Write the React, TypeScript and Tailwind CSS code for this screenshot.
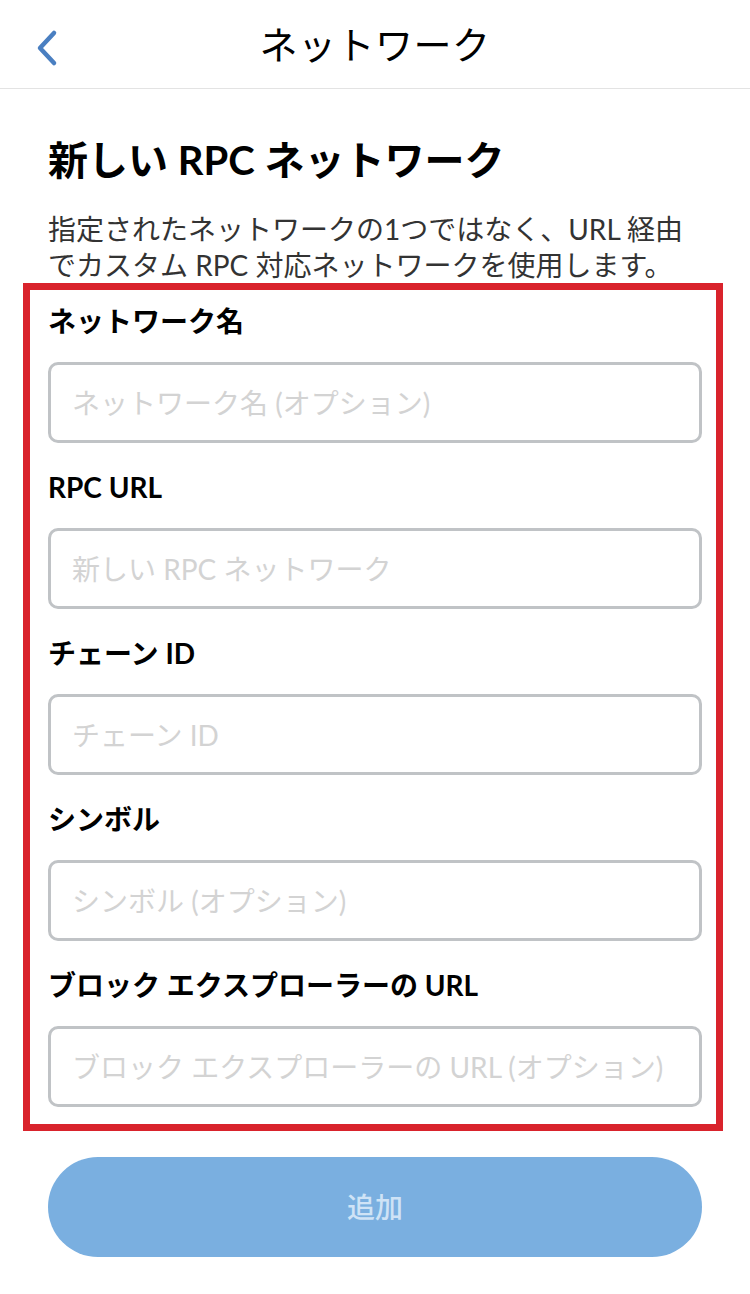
import React from 'react';

const fields = [
  { label: 'ネットワーク名', placeholder: 'ネットワーク名 (オプション)' },
  { label: 'RPC URL', placeholder: '新しい RPC ネットワーク' },
  { label: 'チェーン ID', placeholder: 'チェーン ID' },
  { label: 'シンボル', placeholder: 'シンボル (オプション)' },
  { label: 'ブロック エクスプローラーの URL', placeholder: 'ブロック エクスプローラーの URL (オプション)' },
];

export default function App() {
  return (
    <div className="min-h-screen bg-white font-['Lato','Noto_Sans_CJK_JP',sans-serif] text-black">
      {/* header */}
      <div className="relative h-[89px] border-b border-[#e3e3e3] flex items-center justify-center">
        <button className="absolute left-[30px] top-[24px] w-[36px] h-[48px] flex items-center justify-center">
          <svg width="26" height="40" viewBox="0 0 26 40" fill="none">
            <path d="M19 5 L5 20 L19 35" stroke="#4a7fc1" strokeWidth="4.5" strokeLinecap="round" strokeLinejoin="round" />
          </svg>
        </button>
        <h1 className="text-[38px] leading-[48px] font-normal tracking-[0.5px]">ネットワーク</h1>
      </div>

      <div className="px-[48px]">
        <h2 className="mt-[46px] text-[40px] leading-[50px] font-bold">新しい RPC ネットワーク</h2>
        <p className="mt-[26px] text-[28px] leading-[36px] text-[#333]">
          指定されたネットワークの1つではなく、URL 経由
          <br />
          でカスタム RPC 対応ネットワークを使用します。
        </p>

        <div className="ml-[-25px] mr-[-21px] border-[7px] border-[#d9232c] pl-[18px] pr-[14px] pt-[13px] pb-[17px] flex flex-col gap-[26px]">
          {fields.map((f) => (
            <div key={f.label} className="flex flex-col gap-[23px]">
              <label className="text-[28px] leading-[36px] font-bold">{f.label}</label>
              <input
                placeholder={f.placeholder}
                className="h-[81px] w-full rounded-[10px] border-[3px] border-[#c0c3c6] px-[21px] text-[28px] outline-none placeholder:text-[#d3d3d3]"
              />
            </div>
          ))}
        </div>

        <button className="mt-[26px] h-[100px] w-full rounded-full bg-[#7aafe0] text-[28px] font-medium text-[#cfe3f6]">
          追加
        </button>
      </div>
    </div>
  );
}
